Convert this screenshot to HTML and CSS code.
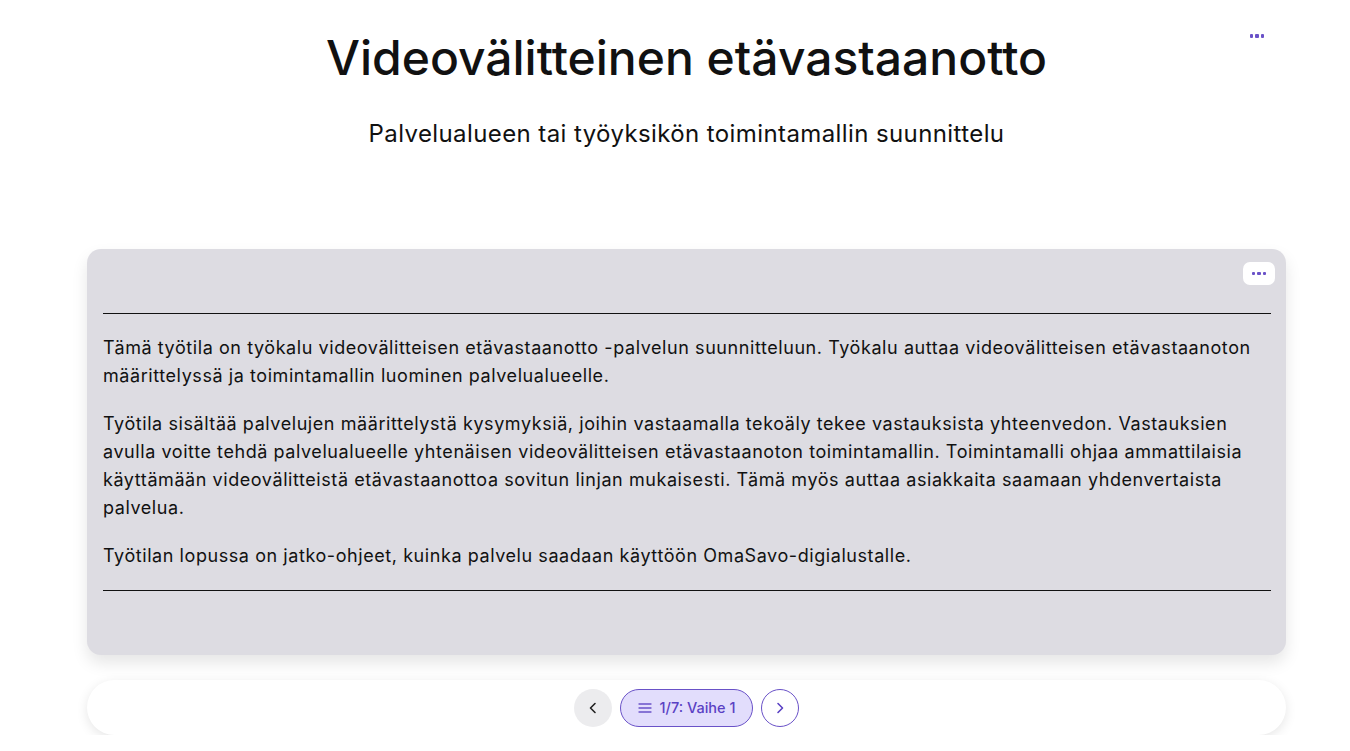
FILE: index.html
```html
<!DOCTYPE html>
<html lang="fi">
<head>
<meta charset="utf-8">
<title>Videovälitteinen etävastaanotto</title>
<link rel="stylesheet" href="styles.css">
</head>
<body>
<div class="page">
  <header class="header">
    <h1 class="title">Videovälitteinen etävastaanotto</h1>
    <p class="subtitle">Palvelualueen tai työyksikön toimintamallin suunnittelu</p>
    <button class="dots-btn top-dots" aria-label="Lisää"><span></span><span></span><span></span></button>
  </header>
  <main class="card">
    <div class="card-top">
      <button class="dots-btn card-dots" aria-label="Lisää"><span></span><span></span><span></span></button>
    </div>
    <hr class="rule">
    <div class="content">
      <p>Tämä työtila on työkalu videovälitteisen etävastaanotto -palvelun suunnitteluun. Työkalu auttaa videovälitteisen etävastaanoton määrittelyssä ja toimintamallin luominen palvelualueelle.</p>
      <p>Työtila sisältää palvelujen määrittelystä kysymyksiä, joihin vastaamalla tekoäly tekee vastauksista yhteenvedon. Vastauksien avulla voitte tehdä palvelualueelle yhtenäisen videovälitteisen etävastaanoton toimintamallin. Toimintamalli ohjaa ammattilaisia käyttämään videovälitteistä etävastaanottoa sovitun linjan mukaisesti. Tämä myös auttaa asiakkaita saamaan yhdenvertaista palvelua.</p>
      <p>Työtilan lopussa on jatko-ohjeet, kuinka palvelu saadaan käyttöön OmaSavo-digialustalle.</p>
    </div>
    <hr class="rule">
  </main>
  <nav class="navbar">
    <button class="nav-btn prev" aria-label="Edellinen">
      <svg width="14" height="14" viewBox="0 0 14 14"><path d="M9 2.5 L4.5 7 L9 11.5" fill="none" stroke="#222" stroke-width="1.6" stroke-linecap="round" stroke-linejoin="round"/></svg>
    </button>
    <button class="step-pill">
      <svg width="14" height="12" viewBox="0 0 14 12"><path d="M1 2h12M1 6h12M1 10h12" stroke="#6a52c8" stroke-width="1.3" stroke-linecap="round"/></svg>
      <span>1/7: Vaihe 1</span>
    </button>
    <button class="nav-btn next" aria-label="Seuraava">
      <svg width="14" height="14" viewBox="0 0 14 14"><path d="M5 2.5 L9.5 7 L5 11.5" fill="none" stroke="#5a41c4" stroke-width="1.6" stroke-linecap="round" stroke-linejoin="round"/></svg>
    </button>
  </nav>
</div>
</body>
</html>
```
FILE: styles.css
```css
* { box-sizing: border-box; }
html, body { margin: 0; padding: 0; background: #ffffff; }
body {
  font-family: "Inter", "Noto Sans", sans-serif;
  color: #111;
}
.page {
  width: 1350px;
  padding: 0 64px 0 87px;
}
.header {
  position: relative;
  text-align: center;
  padding-top: 28px;
  height: 249px;
}
.title {
  margin: 0;
  font-size: 48px;
  font-weight: 500;
  line-height: 60px;
  letter-spacing: 0;
}
.subtitle {
  margin: 28px 0 0;
  font-size: 24px;
  line-height: 36px;
  font-weight: 400;
  letter-spacing: 0.4px;
}
.dots-btn {
  display: flex;
  align-items: center;
  justify-content: center;
  gap: 2px;
  border: none;
  background: #fff;
  padding: 0;
  cursor: pointer;
}
.dots-btn span {
  width: 3.5px;
  height: 3.5px;
  background: #6a52c8;
  border-radius: 1px;
}
.top-dots {
  position: absolute;
  top: 28px;
  right: 19px;
  width: 20px;
  height: 16px;
  background: transparent;
}
.card {
  width: 1199px;
  background: #dddce2;
  border-radius: 14px;
  box-shadow: 0 8px 16px rgba(0,0,0,0.10);
  padding: 13px 15px 64px 16px;
}
.card-top {
  display: flex;
  justify-content: flex-end;
  height: 51px;
}
.card-dots {
  width: 32px;
  height: 23px;
  border-radius: 7px;
  margin-right: -4px;
}
.rule {
  border: none;
  border-top: 1px solid #111;
  margin: 0;
}
.content {
  padding: 20px 0 20px;
  font-size: 18px;
  line-height: 28px;
  letter-spacing: 0.57px;
}
.content p { margin: 0 0 20px; }
.content p:last-child { margin-bottom: 0; }
.navbar {
  margin-top: 25px;
  width: 1199px;
  height: 55px;
  background: #fff;
  border-radius: 28px;
  box-shadow: 0 3px 12px rgba(0,0,0,0.10);
  display: flex;
  align-items: center;
  justify-content: center;
  gap: 8px;
}
.nav-btn {
  width: 38px;
  height: 38px;
  border-radius: 50%;
  display: flex;
  align-items: center;
  justify-content: center;
  padding: 0;
  cursor: pointer;
}
.prev { background: #ececee; border: none; }
.next { background: #fff; border: 1.5px solid #6a52c8; }
.step-pill {
  height: 38px;
  padding: 0 17px;
  border-radius: 19px;
  background: #e2ddfc;
  border: 1.5px solid #6a52c8;
  color: #5a41c4;
  display: flex;
  align-items: center;
  gap: 8px;
  font-family: inherit;
  font-size: 14.5px;
  font-weight: 500;
  cursor: pointer;
}
```
